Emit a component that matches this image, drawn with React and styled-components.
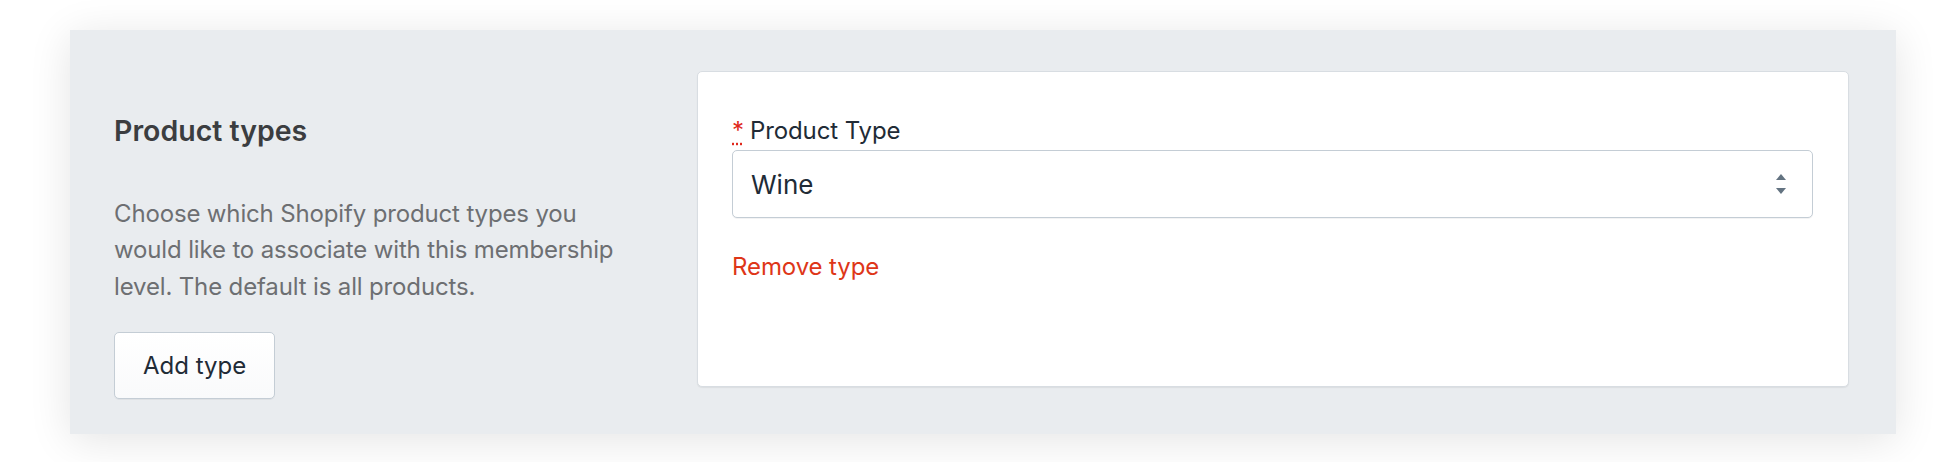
import React from "react";
import styled, { createGlobalStyle } from "styled-components";

const Global = createGlobalStyle`
  html, body { margin: 0; padding: 0; background: #ffffff; }
  body { font-family: Inter, "Noto Sans", "Liberation Sans", sans-serif; }
  * { box-sizing: border-box; }
`;

const Page = styled.div`
  padding: 30px 64px 30px 70px;
  width: 1960px;
`;

const Section = styled.section`
  display: flex;
  align-items: flex-start;
  gap: 47px;
  width: 1826px;
  background: #e9ecef;
  padding: 41px 47px 35px 44px;
  box-shadow: 0 6px 40px rgba(0, 0, 0, 0.11);
`;

const Aside = styled.div`
  width: 536px;
  flex: none;
  display: flex;
  flex-direction: column;
  align-items: flex-start;
  padding-top: 42px;
`;

const Title = styled.h2`
  margin: 0;
  font-size: 28.5px;
  line-height: 36px;
  font-weight: 600;
  color: #3b3d40;
`;

const Description = styled.p`
  margin: 47px 0 0;
  font-size: 24px;
  line-height: 36.3px;
  letter-spacing: -0.15px;
  color: #6d6f72;
`;

const Button = styled.button`
  margin-top: 27px;
  height: 67px;
  padding: 0 28px;
  font-family: inherit;
  font-size: 24px;
  color: #212b36;
  background: linear-gradient(180deg, #ffffff, #f9fafb);
  border: 1px solid #c4cdd5;
  border-radius: 5px;
  box-shadow: 0 1px 0 0 rgba(22, 29, 37, 0.05);
  cursor: pointer;
`;

const Card = styled.div`
  flex: 1;
  min-height: 316px;
  background: #ffffff;
  border: 1px solid #d8dde2;
  border-radius: 5px;
  box-shadow: 0 1px 1px rgba(63, 63, 68, 0.08);
  padding: 44px 35px 35px 34px;
`;

const Label = styled.label`
  display: block;
  font-size: 24px;
  line-height: 30px;
  letter-spacing: -0.1px;
  color: #212b36;
  margin-bottom: 4px;
`;

const Required = styled.abbr`
  color: #e0281c;
  text-decoration: underline dotted #e0281c;
  text-underline-offset: 4px;
  margin-right: 6px;
`;

const SelectBox = styled.div`
  display: flex;
  align-items: center;
  height: 68px;
  border: 1px solid #c4cdd5;
  border-radius: 5px;
  box-shadow: 0 1px 0 0 rgba(22, 29, 37, 0.05);
  padding: 0 26px 0 18px;
  background: #ffffff;
`;

const SelectValue = styled.span`
  flex: 1;
  font-size: 26px;
  color: #212b36;
`;

const RemoveLink = styled.a`
  display: inline-block;
  margin-top: 34px;
  font-size: 24px;
  line-height: 30px;
  letter-spacing: -0.1px;
  color: #de3618;
  text-decoration: none;
  cursor: pointer;
`;

const Arrows = () => (
  <svg width="10" height="20" viewBox="0 0 10 20" aria-hidden="true">
    <path d="M5 0 L10 6 L0 6 Z" fill="#637381" />
    <path d="M0 14 L10 14 L5 20 Z" fill="#637381" />
  </svg>
);

export default function App() {
  return (
    <>
      <Global />
      <Page>
        <Section>
          <Aside>
            <Title>Product types</Title>
            <Description>
              Choose which Shopify product types you would like to associate
              with this membership level. The default is all products.
            </Description>
            <Button type="button">Add type</Button>
          </Aside>
          <Card>
            <Label>
              <Required title="required">*</Required>Product Type
            </Label>
            <SelectBox>
              <SelectValue>Wine</SelectValue>
              <Arrows />
            </SelectBox>
            <RemoveLink>Remove type</RemoveLink>
          </Card>
        </Section>
      </Page>
    </>
  );
}
